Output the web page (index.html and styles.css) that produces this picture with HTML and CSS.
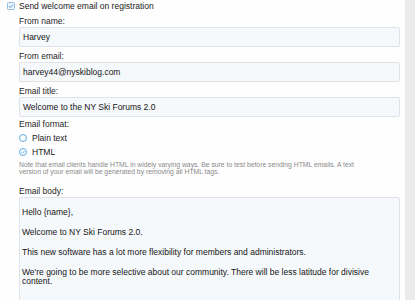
FILE: index.html
```html
<!DOCTYPE html>
<html>
<head>
<meta charset="utf-8">
<link rel="stylesheet" href="styles.css">
</head>
<body>
<div class="page">
  <main class="panel">
    <div class="check-row">
      <svg class="checkbox" width="8" height="8" viewBox="0 0 8 8"><rect x="0.5" y="0.5" width="7" height="7" rx="1" fill="#eef5fc" stroke="#8fbde6"/><path d="M2 4.1 L3.4 5.5 L6 2.6" fill="none" stroke="#3f95dc" stroke-width="0.9"/></svg>
      <span>Send welcome email on registration</span>
    </div>
    <div class="fields">
      <div class="field">
        <div class="label">From name:</div>
        <div class="input">Harvey</div>
      </div>
      <div class="field">
        <div class="label">From email:</div>
        <div class="input">harvey44@nyskiblog.com</div>
      </div>
      <div class="field">
        <div class="label">Email title:</div>
        <div class="input">Welcome to the NY Ski Forums 2.0</div>
      </div>
    </div>
    <div class="format">
      <div class="label">Email format:</div>
      <div class="radios">
        <div class="radio-row">
          <svg class="radio" width="8" height="8" viewBox="0 0 8 8"><circle cx="4" cy="4" r="3.5" fill="#fff" stroke="#4aa0dd" stroke-width="0.9"/></svg>
          <span>Plain text</span>
        </div>
        <div class="radio-row">
          <svg class="radio" width="8" height="8" viewBox="0 0 8 8"><circle cx="4" cy="4" r="3.5" fill="#fff" stroke="#4aa0dd" stroke-width="0.9"/><path d="M2.3 4.1 L3.5 5.2 L5.7 2.9" fill="none" stroke="#4aa0dd" stroke-width="0.8"/></svg>
          <span>HTML</span>
        </div>
      </div>
      <div class="note">Note that email clients handle HTML in widely varying ways. Be sure to test before sending HTML emails. A text<br>version of your email will be generated by removing all HTML tags.</div>
    </div>
    <div class="body-field">
      <div class="label">Email body:</div>
      <div class="textarea">
        <p>Hello {name},</p>
        <p>Welcome to NY Ski Forums 2.0.</p>
        <p>This new software has a lot more flexibility for members and administrators.</p>
        <p>We're going to be more selective about our community. There will be less latitude for divisive<br>content.</p>
      </div>
    </div>
  </main>
  <div class="gutter"></div>
</div>
</body>
</html>
```
FILE: styles.css
```css
html, body {
  margin: 0;
  padding: 0;
}
body {
  font-family: "Liberation Sans", Arial, sans-serif;
  font-size: 8.5px;
  color: #1a1a1a;
  background: #ebebeb;
}
.page {
  display: flex;
  height: 300px;
  overflow: hidden;
}
.panel {
  flex: 0 0 405px;
  box-sizing: border-box;
  background: #fefefe;
  padding: 0 5.5px 0 7px;
}
.gutter {
  flex: 1;
  background: #ebebeb;
}
.check-row {
  display: flex;
  align-items: center;
  height: 12px;
  line-height: 12px;
}
.checkbox {
  flex: none;
  margin-right: 4px;
}
.fields {
  display: flex;
  flex-direction: column;
  gap: 4px;
  margin-top: 4px;
  padding-left: 12px;
}
.label {
  line-height: 11px;
  height: 11px;
  color: #1e1e1e;
}
.input {
  box-sizing: border-box;
  height: 20px;
  line-height: 18px;
  padding: 0 3px;
  border: 1px solid #dfe2e7;
  border-radius: 2px;
  background: #f6f9fc;
  color: #141414;
}
.format {
  margin-top: 2px;
  padding-left: 12px;
}
.radios {
  margin-top: 1px;
}
.radio-row {
  display: flex;
  align-items: center;
  height: 14px;
}
.radio {
  flex: none;
  margin-right: 5px;
}
.note {
  margin-top: 1.5px;
  font-size: 6.8px;
  line-height: 7px;
  color: #8a8a8a;
}
.body-field {
  margin-top: 11px;
  padding-left: 12px;
}
.textarea {
  box-sizing: border-box;
  height: 130px;
  margin-top: 0.5px;
  padding: 10px 2px;
  border: 1px solid #dfe2e7;
  border-radius: 2px;
  background: #f6f9fc;
  color: #141414;
}
.textarea p {
  margin: 0 0 11px;
  line-height: 9px;
  white-space: nowrap;
}
```
